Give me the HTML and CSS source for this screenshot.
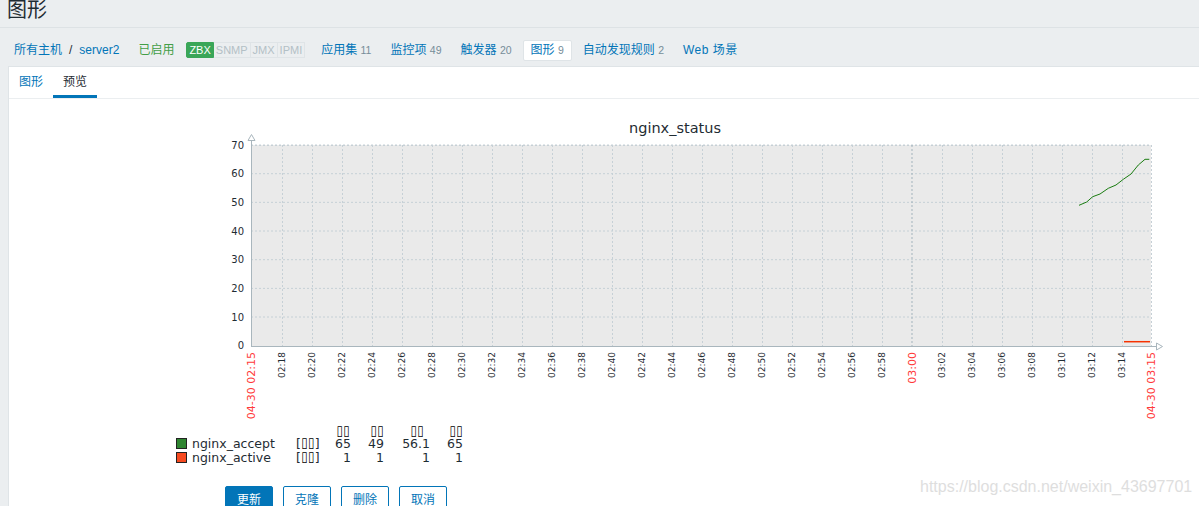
FILE: index.html
```html
<!DOCTYPE html>
<html lang="zh-CN">
<head>
  <meta charset="UTF-8">
  <title>图形</title>
  <link rel="stylesheet" href="styles.css">
</head>
<body>
  <div class="header">
    <h1>图形</h1>
  </div>

  <ul class="host-nav">
    <li class="nav-item breadcrumb"><a href="#">所有主机</a><span class="sep">/</span><a href="#">server2</a></li>
    <li class="nav-item status-on">已启用</li>
    <li class="nav-item badges">
      <span class="badge badge-on">ZBX</span><span class="badge">SNMP</span><span class="badge">JMX</span><span class="badge">IPMI</span>
    </li>
    <li class="nav-item"><a href="#">应用集</a> <sup>11</sup></li>
    <li class="nav-item"><a href="#">监控项</a> <sup>49</sup></li>
    <li class="nav-item"><a href="#">触发器</a> <sup>20</sup></li>
    <li class="nav-item selected"><a href="#">图形</a> <sup>9</sup></li>
    <li class="nav-item"><a href="#">自动发现规则</a> <sup>2</sup></li>
    <li class="nav-item"><a href="#" class="spaced">Web 场景</a></li>
  </ul>

  <div class="panel">
    <ul class="tabs">
      <li class="tab"><a href="#">图形</a></li>
      <li class="tab active">预览</li>
    </ul>

    <div class="graph-box">
      <svg class="graph" width="1010" height="364" viewBox="0 0 1010 364">
        <g transform="translate(-160,-108)">
          <text class="g-title" x="675" y="133" text-anchor="middle">nginx_status</text>

          <rect x="251" y="145" width="900" height="201" fill="#eaeaea"/>
          <g id="grid-v" stroke="#c6d0d6" stroke-dasharray="2,2"></g>
          <g id="grid-h" stroke="#c6d0d6" stroke-dasharray="2,2"></g>
          <line x1="912" y1="145" x2="912" y2="346" stroke="#a3b3bc" stroke-dasharray="2,2"/>
          <line x1="1151.5" y1="145" x2="1151.5" y2="346" stroke="#c6d0d6" stroke-dasharray="2,2"/>

          <polyline fill="none" stroke="#1a7c11" stroke-width="1"
            points="1079,205.3 1086.7,202 1092.7,196.7 1100,194 1108.3,188.3 1116,185 1123.3,179.3 1131,174 1138.3,165 1145,159.3 1149.3,159.3"/>
          <line x1="1124" y1="341.7" x2="1150" y2="341.7" stroke="#f63100" stroke-width="1.5"/>

          <line x1="251.5" y1="140" x2="251.5" y2="346.5" stroke="#a9b6bd"/>
          <line x1="251" y1="346.5" x2="1156" y2="346.5" stroke="#a9b6bd"/>
          <polygon points="248,140.5 255,140.5 251.5,134.5" fill="#fff" stroke="#a9b6bd"/>
          <polygon points="1156.5,343 1156.5,350 1162.5,346.5" fill="#fff" stroke="#a9b6bd"/>

          <g id="y-labels" class="g-ylabel"></g>
          <g id="x-labels"></g>

          <g class="g-legend">
            <rect x="176.5" y="438.5" width="10" height="10" fill="#2f8531" stroke="#222"/>
            <rect x="176.5" y="452.5" width="10" height="10" fill="#f64a20" stroke="#222"/>
            <text x="192" y="448">nginx_accept</text>
            <text x="192" y="462">nginx_active</text>
            <text x="296" y="448">[<tspan class="g-tofu">⌷⌷</tspan>]</text>
            <text x="296" y="462">[<tspan class="g-tofu">⌷⌷</tspan>]</text>
            <g text-anchor="end">
              <text class="g-tofu" x="350" y="435.5">⌷⌷</text>
              <text class="g-tofu" x="384" y="435.5">⌷⌷</text>
              <text class="g-tofu" x="424" y="435.5">⌷⌷</text>
              <text class="g-tofu" x="463" y="435.5">⌷⌷</text>
              <text x="351" y="448">65</text>
              <text x="384" y="448">49</text>
              <text x="430" y="448">56.1</text>
              <text x="463" y="448">65</text>
              <text x="351" y="462">1</text>
              <text x="384" y="462">1</text>
              <text x="430" y="462">1</text>
              <text x="463" y="462">1</text>
            </g>
          </g>
        </g>
      </svg>
    </div>

    <div class="form-buttons">
      <button class="btn btn-main">更新</button>
      <button class="btn">克隆</button>
      <button class="btn">删除</button>
      <button class="btn">取消</button>
    </div>
  </div>

  <div class="watermark">https://blog.csdn.net/weixin_43697701</div>

  <script src="graph.js"></script>
</body>
</html>
```

FILE: styles.css
```css
body {
  margin: 0;
  background-color: #ebeef0;
  font-family: "Liberation Sans", "Noto Sans CJK SC", sans-serif;
  font-size: 12px;
  color: #1f2c33;
  height: 506px;
  overflow: hidden;
  position: relative;
}

a {
  color: #0275b8;
  text-decoration: none;
}

.header {
  height: 27px;
  border-bottom: 1px solid #dde2e5;
}

.header h1 {
  margin: 0;
  padding-left: 7px;
  font-size: 20px;
  line-height: 21px;
  font-weight: normal;
  color: #1f2c33;
}

.host-nav {
  list-style: none;
  margin: 0;
  padding: 6px 0 0 6px;
  height: 32px;
  display: flex;
  align-items: center;
  gap: 3px;
}

.nav-item {
  padding: 0 7px;
  line-height: 19px;
  border: 1px solid transparent;
  border-radius: 2px;
}

.nav-item sup {
  vertical-align: baseline;
  font-size: 10.5px;
  color: #768d99;
}

.nav-item .spaced {
  letter-spacing: 0.5px;
}

.nav-item.selected {
  background-color: #fff;
  border-color: #dfe4e7;
}

.breadcrumb .sep {
  margin: 0 7px;
  color: #1f2c33;
}

.status-on {
  color: #429e47;
}

.badges {
  padding: 0;
  margin-right: 4px;
  display: flex;
}

.badge {
  font-size: 11px;
  line-height: 14px;
  padding: 0 2px;
  color: #b3c0c6;
  border: 1px solid #dfe4e7;
  border-left-width: 0;
}

.badge-on {
  color: #fff;
  background-color: #3aa658;
  border-color: #3aa658;
  border-left-width: 1px;
  border-radius: 2px 0 0 2px;
}

.panel {
  margin-left: 8px;
  background-color: #fff;
  border-top: 1px solid #dfe4e7;
  border-left: 1px solid #dfe4e7;
  height: 460px;
}

.tabs {
  list-style: none;
  margin: 0;
  padding: 0;
  height: 31px;
  display: flex;
  border-bottom: 1px solid #ebeef0;
}

.tab {
  padding: 0 10px;
  line-height: 31px;
  box-sizing: border-box;
  height: 31px;
}

.tab.active {
  color: #1f2c33;
  border-bottom: 3px solid #0275b8;
  line-height: 30px;
}

.graph-box {
  margin: 9px 0 0 151px;
  height: 364px;
}

.graph {
  display: block;
  font-family: "DejaVu Sans", sans-serif;
  fill: #1f2c33;
}

.g-title {
  font-size: 14.5px;
}

.g-ylabel {
  font-size: 10px;
}

.g-xlabel {
  font-size: 9px;
}

.g-xlabel-red {
  font-size: 11px;
  fill: #ff3a3a;
}

.g-legend {
  font-size: 12.5px;
}

.g-tofu {
  font-family: "DejaVu Sans Mono", monospace;
  font-size: 11.5px;
  fill: #000;
}

.form-buttons {
  margin: 14px 0 0 216px;
  display: flex;
  gap: 10px;
}

.btn {
  font-family: "Liberation Sans", "Noto Sans CJK SC", sans-serif;
  font-size: 12px;
  height: 24px;
  padding: 0 11px;
  background-color: #fff;
  color: #0275b8;
  border: 1px solid #0275b8;
  border-radius: 2px;
}

.btn-main {
  background-color: #0275b8;
  color: #fff;
}

.watermark {
  position: absolute;
  left: 920px;
  top: 478px;
  font-family: "Liberation Sans", Arial, sans-serif;
  font-size: 16px;
  color: #dedede;
}
```

FILE: graph.js
```javascript
// grid lines and axis labels for the nginx_status graph
var NS = "http://www.w3.org/2000/svg";

function el(name, attrs, text) {
  var node = document.createElementNS(NS, name);
  for (var k in attrs) node.setAttribute(k, attrs[k]);
  if (text) node.textContent = text;
  return node;
}

var gridV = document.getElementById("grid-v");
var gridH = document.getElementById("grid-h");
var yLabels = document.getElementById("y-labels");
var xLabels = document.getElementById("x-labels");

// horizontal lines: 0..70, step 10
for (var i = 0; i <= 7; i++) {
  var y = 345.7 - i * 28.67;
  if (i > 0) {
    gridH.appendChild(el("line", { x1: 251, y1: y, x2: 1151, y2: y }));
  }
  yLabels.appendChild(el("text", { x: 244, y: y + 3.6, "text-anchor": "end" }, String(i * 10)));
}

// vertical lines every 2 minutes, 02:18 .. 03:14
function rotLabel(x, text, cls) {
  var size = cls === "g-xlabel" ? 9 : 11;
  var t = el("text", {
    "class": cls,
    "text-anchor": "end",
    x: 0,
    y: size * 0.36,
    transform: "translate(" + x + ",352) rotate(-90)"
  }, text);
  xLabels.appendChild(t);
}

for (var k = 0; k <= 28; k++) {
  var x = 282 + k * 30;
  var minutes = 2 * 60 + 18 + k * 2;
  var hh = "0" + Math.floor(minutes / 60);
  var mm = minutes % 60;
  var label = hh + ":" + (mm < 10 ? "0" + mm : mm);
  if (k !== 21) {
    gridV.appendChild(el("line", { x1: x + 0.5, y1: 145, x2: x + 0.5, y2: 346 }));
    rotLabel(x, label, "g-xlabel");
  } else {
    rotLabel(x, label, "g-xlabel-red");
  }
}

gridH.appendChild(el("line", { x1: 251, y1: 145.5, x2: 1151, y2: 145.5 }));

rotLabel(251, "04-30 02:15", "g-xlabel-red");
rotLabel(1151.5, "04-30 03:15", "g-xlabel-red");
```
